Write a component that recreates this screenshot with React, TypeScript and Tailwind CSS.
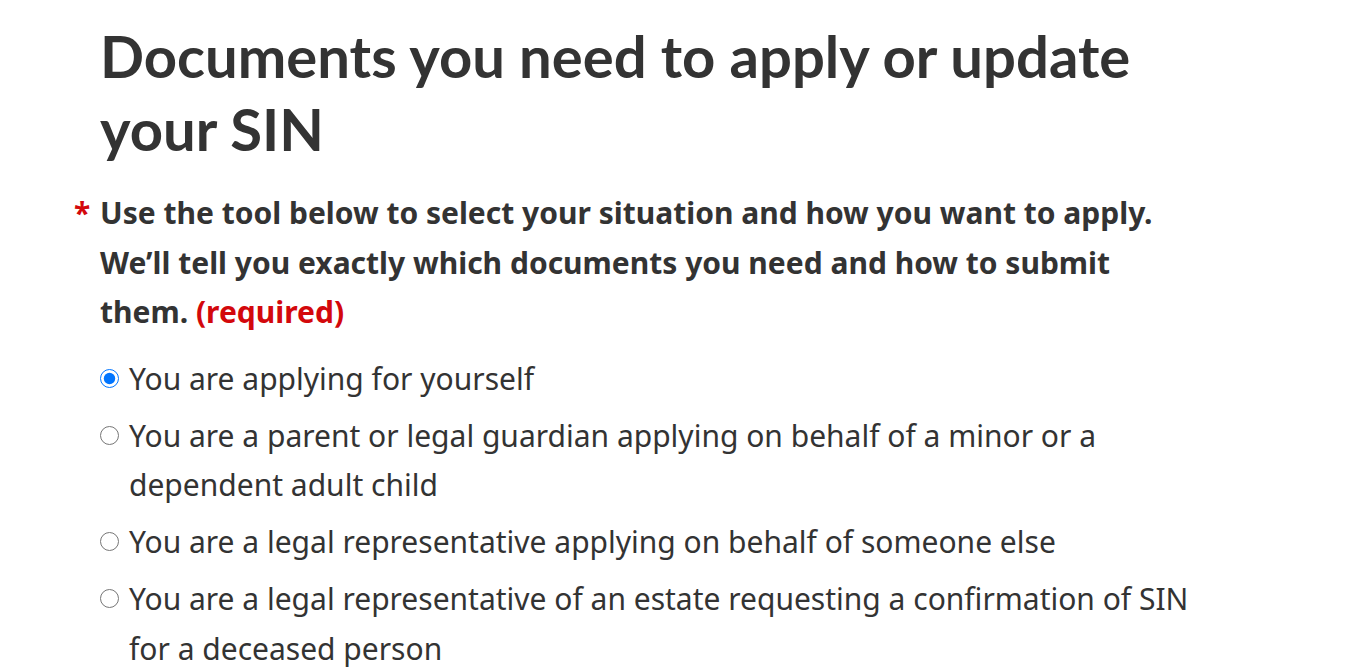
import { useState } from "react";

const options = [
  "You are applying for yourself",
  "You are a parent or legal guardian applying on behalf of a minor or a dependent adult child",
  "You are a legal representative applying on behalf of someone else",
  "You are a legal representative of an estate requesting a confirmation of SIN for a deceased person",
];

const App = () => {
  const [selected, setSelected] = useState(0);

  return (
    <main className="min-h-screen bg-white pl-[100px] pt-5 text-[#333333] font-['Noto_Sans',sans-serif]">
      <div className="max-w-[1095px]">
        <h1 className="font-['Lato',sans-serif] font-bold text-[58px] leading-[72.5px]">
          Documents you need to apply or update your SIN
        </h1>

        <fieldset className="mt-[23px]">
          <legend className="font-bold text-[30px] leading-[49.5px]">
            <span className="inline-block w-[26px] -ml-[26px] text-[#d3080c]">*</span>
            Use the tool below to select your situation and how you want to apply. We’ll tell you
            exactly which documents you need and how to submit them.{" "}
            <span className="text-[#d3080c]">(required)</span>
          </legend>

          <div className="mt-[17px] flex flex-col gap-[7.5px]">
            {options.map((label, i) => (
              <label key={i} className="flex items-start gap-[10px] cursor-pointer">
                <span className="h-[49.5px] flex items-center shrink-0">
                  <input
                    type="radio"
                    name="situation"
                    checked={selected === i}
                    onChange={() => setSelected(i)}
                    className="m-0 w-[19px] h-[19px]"
                  />
                </span>
                <span className="text-[30px] leading-[49.5px]">{label}</span>
              </label>
            ))}
          </div>
        </fieldset>
      </div>
    </main>
  );
};

export default App;
